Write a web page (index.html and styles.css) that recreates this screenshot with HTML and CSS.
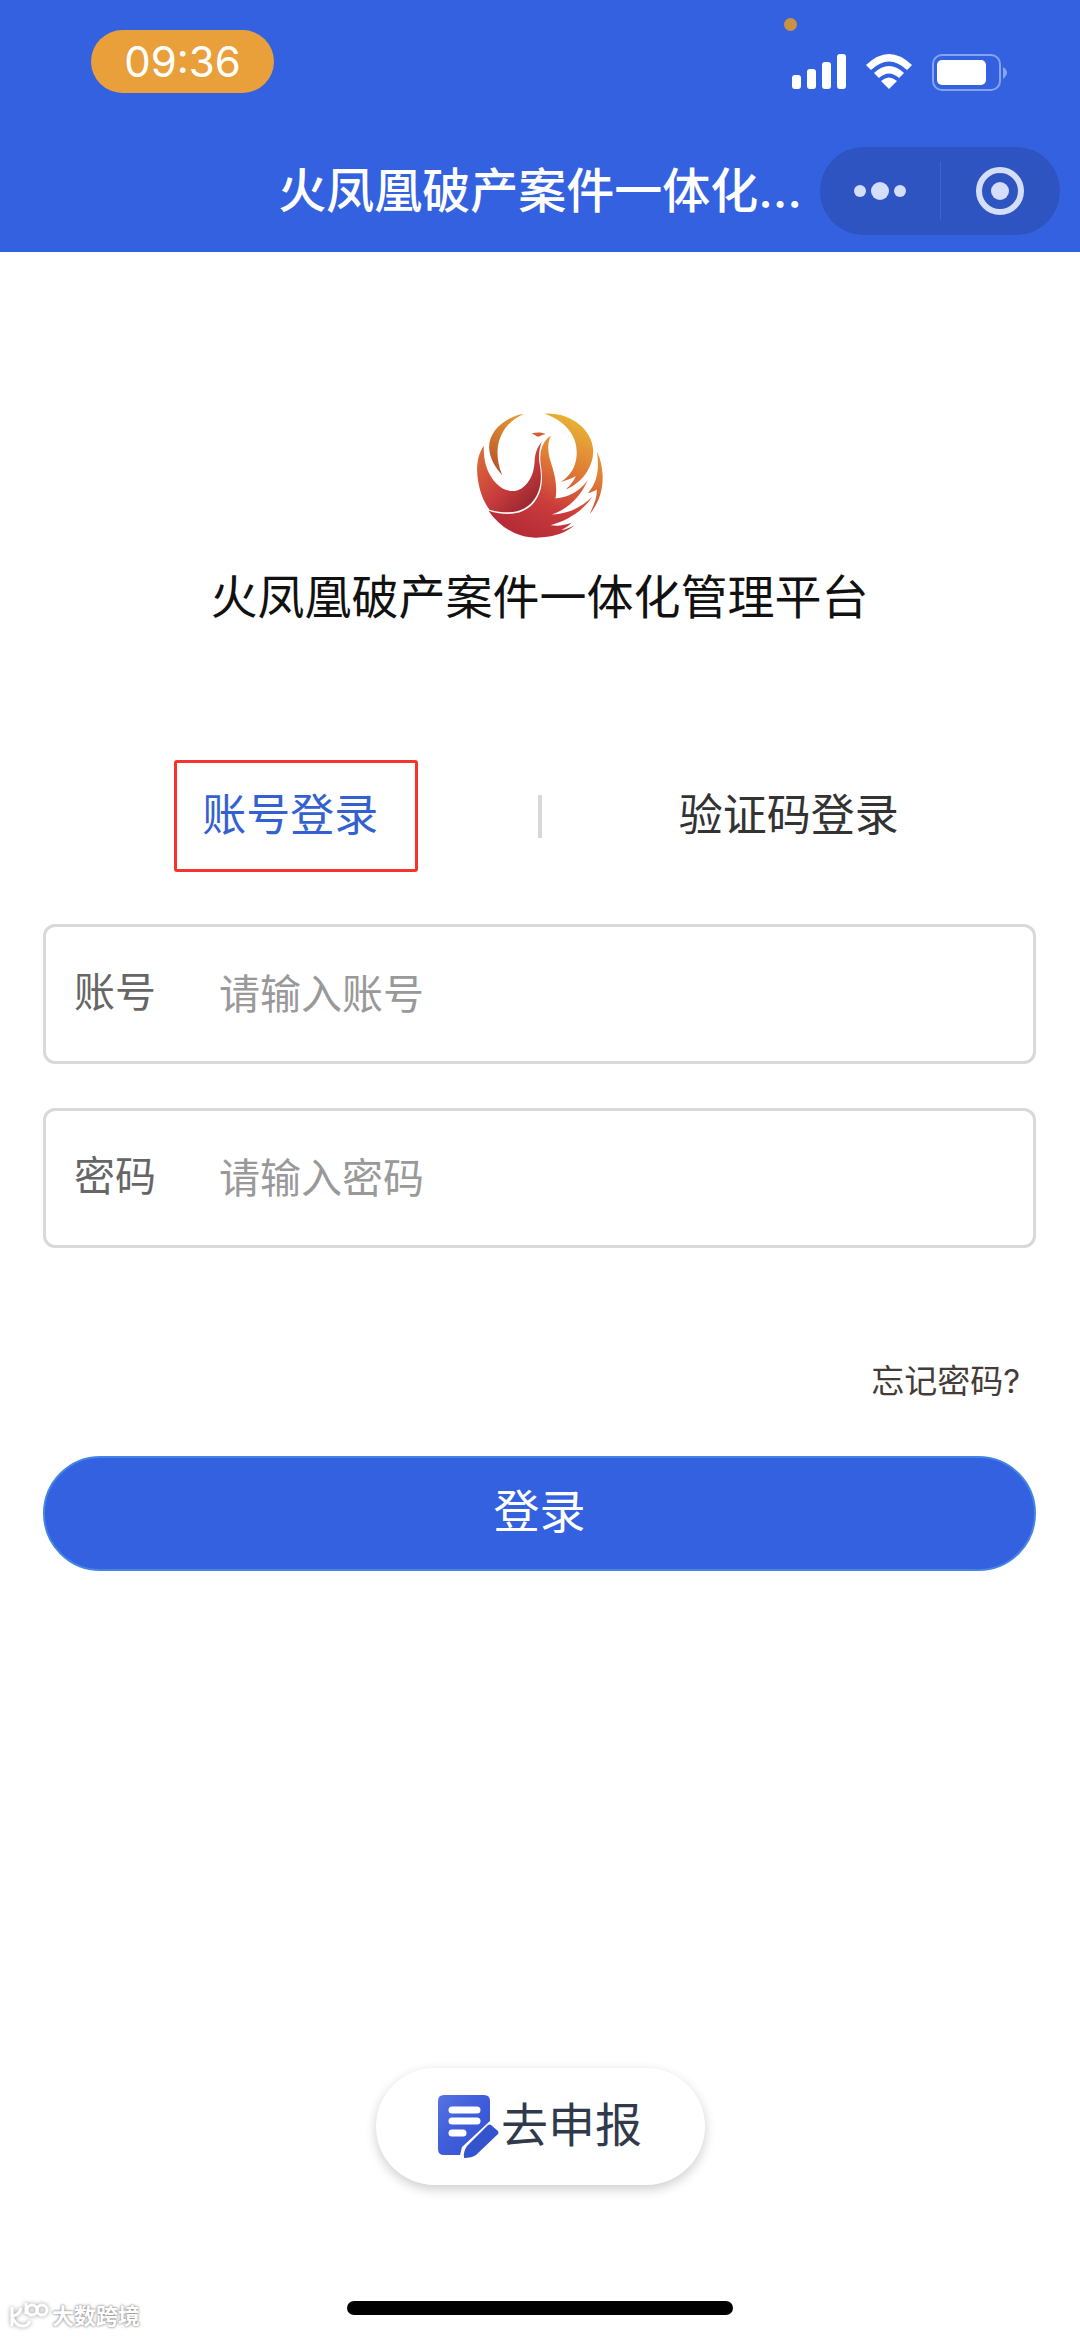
FILE: index.html
```html
<!DOCTYPE html>
<html lang="zh-CN">
<head>
<meta charset="utf-8">
<meta name="viewport" content="width=device-width, initial-scale=1">
<title>火凤凰破产案件一体化管理平台</title>
<link rel="stylesheet" href="styles.css">
</head>
<body>
<header class="header">
  <div class="status">
    <span class="time">09:36</span>
    <div class="indicators">
      <span class="recording"></span>
      <svg class="signal" viewBox="0 0 54 36" aria-hidden="true"><rect x="0" y="21" width="9" height="14" rx="3"/><rect x="15" y="15" width="9" height="20" rx="3"/><rect x="30" y="8" width="9" height="27" rx="3"/><rect x="45" y="0" width="9" height="35" rx="3"/></svg>
      <svg class="wifi" viewBox="0 0 46 36" aria-hidden="true"><path d="M0 11Q23-11 46 11L41 16Q23-1 5 16Z"/><path d="M8 19Q23 5 38 19L33 24Q23 15 13 24Z"/><path d="M15 27Q23 20 31 27L23 35Z"/></svg>
      <svg class="battery" viewBox="0 0 76 37" aria-hidden="true"><rect x="1" y="1" width="67" height="35" rx="9" fill="none" stroke="#84a3f0" stroke-width="2"/><rect x="5" y="6" width="49" height="25" rx="5" fill="#fff"/><path d="M71 13Q79 18 71 25Z" fill="#84a3f0"/></svg>
    </div>
  </div>
  <div class="nav">
    <h1 class="nav-title">火凤凰破产案件一体化…</h1>
    <div class="capsule">
      <button class="capsule-button" type="button" aria-label="更多"><svg width="52" height="24" viewBox="0 0 52 24"><circle cx="6" cy="12" r="6"/><circle cx="26" cy="12" r="9"/><circle cx="46" cy="12" r="6"/></svg></button>
      <button class="capsule-button" type="button" aria-label="关闭"><svg width="48" height="48" viewBox="0 0 48 48"><circle cx="24" cy="24" r="21" fill="none" stroke="#d5def8" stroke-width="6"/><circle cx="24" cy="24" r="9"/></svg></button>
    </div>
  </div>
</header>

<main class="main">
  <div class="brand">
    <svg class="logo" viewBox="54 38 374 374" aria-hidden="true">
      <defs>
        <linearGradient id="flame" x1="340" y1="50" x2="180" y2="400" gradientUnits="userSpaceOnUse"><stop offset="0" stop-color="#e9b535"/><stop offset=".38" stop-color="#df7a35"/><stop offset=".7" stop-color="#ca3b3b"/><stop offset="1" stop-color="#b52b37"/></linearGradient>
        <linearGradient id="wing" x1="70" y1="160" x2="220" y2="320" gradientUnits="userSpaceOnUse"><stop offset="0" stop-color="#d9683a"/><stop offset=".55" stop-color="#c93b3d"/><stop offset="1" stop-color="#94252f"/></linearGradient>
        <linearGradient id="feather" x1="170" y1="50" x2="105" y2="210" gradientUnits="userSpaceOnUse"><stop offset="0" stop-color="#e6952f"/><stop offset="1" stop-color="#b5522f"/></linearGradient>
      </defs>
      <path fill="url(#feather)" d="M194 43C145 50 88 91 90 145C92 176 106 199 129 226C108 173 111 129 133 94C149 68 169 54 194 43Z"/>
      <path fill="url(#wing)" d="M74 139C57 162 51 197 56 234C61 272 72 302 91 328C150 344 195 336 222 300C248 266 246 222 239 188C236 166 239 148 246 127C231 144 226 164 225 184C224 220 207 260 173 271C133 280 100 247 84 207C75 183 74 161 74 139Z"/>
      <path fill="url(#flame)" d="M274 108C249 124 238 155 243 193C251 239 247 274 226 303C199 340 152 350 88 331C127 387 184 417 248 410C289 407 321 394 343 374C330 381 319 387 304 388C318 382 325 377 334 367C314 375 293 377 272 374C324 360 368 331 397 289C365 321 324 341 276 342C318 329 360 294 383 240C357 275 325 291 287 295C295 250 280 210 269 173C263 147 264 126 274 108Z"/>
      <path fill="url(#flame)" d="M255 43C319 66 353 111 350 163C349 200 330 230 302 246C319 241 333 237 347 228C342 242 332 255 317 268C366 249 399 202 399 153C397 88 329 39 255 43Z"/>
      <path fill="url(#flame)" d="M410 155C417 204 413 245 383 279C394 276 402 273 410 268C410 293 400 318 388 341C414 312 428 271 427 229C426 201 421 177 410 155Z"/>
      <path fill="#cf5e32" d="M215 102C231 98 247 98 258 104C245 105 243 110 236 111C230 112 226 104 215 102Z"/>
    </svg>
    <h2 class="brand-name">火凤凰破产案件一体化管理平台</h2>
  </div>

  <div class="tabs" role="tablist">
    <button class="tab tab-active" type="button" role="tab" aria-selected="true">账号登录</button>
    <span class="tab-divider"></span>
    <button class="tab" type="button" role="tab" aria-selected="false">验证码登录</button>
  </div>

  <form class="form">
    <div class="field">
      <label class="field-label" for="account">账号</label>
      <input class="field-input" id="account" type="text" placeholder="请输入账号">
    </div>
    <div class="field">
      <label class="field-label" for="password">密码</label>
      <input class="field-input" id="password" type="password" placeholder="请输入密码">
    </div>
    <a class="forgot" href="#">忘记密码?</a>
    <button class="login" type="submit">登录</button>
  </form>
</main>

<footer class="footer">
  <button class="declare" type="button">
    <svg class="declare-icon" viewBox="0 0 61 64" aria-hidden="true">
      <defs><linearGradient id="paper" x2="1" y2="1"><stop offset="0" stop-color="#5674e0"/><stop offset=".4" stop-color="#4260dc"/><stop offset="1" stop-color="#3150ce"/></linearGradient></defs>
      <path fill="url(#paper)" d="M6 0H46Q52 0 52 6V26L24 52L22 60H6Q0 60 0 54V6Q0 0 6 0Z"/>
      <path d="M14 15H39M14 26H39M14 38H25" stroke="#fff" stroke-width="7" stroke-linecap="round"/>
      <path fill="#3454cd" d="M50 30Q52 29 53 30L60 36Q61 38 60 39L38 60Q34 63 26 63Q25 57 29 51Z"/>
    </svg>
    <span class="declare-text">去申报</span>
  </button>
  <div class="bottom-bar">
    <div class="watermark">
      <svg class="watermark-icon" viewBox="0 0 40 26" aria-hidden="true"><path d="M4 4V23M13 5Q12 12 4 13Q7 23 15 23Q20 23 22 18M18 0V11"/><circle cx="24" cy="7" r="5"/><circle cx="34" cy="7" r="5"/></svg>
      <span>大数跨境</span>
    </div>
    <span class="home-indicator"></span>
  </div>
</footer>
</body>
</html>
```
FILE: styles.css
```css
* { box-sizing: border-box; }

body {
  margin: 0;
  min-height: 100vh;
  display: flex;
  flex-direction: column;
  background: #fff;
  color: #111;
  font-family: Inter, "Noto Sans CJK SC", sans-serif;
}

button {
  margin: 0;
  padding: 0;
  border: 0;
  background: none;
  color: inherit;
  font: inherit;
}

h1, h2 { margin: 0; font-weight: 400; }
svg { display: block; }

/* Header */
.header {
  height: 252px;
  background: #3461e0;
  color: #fff;
}

.status {
  display: flex;
  justify-content: space-between;
  padding: 30px 72px 0 91px;
}

.time {
  width: 183px;
  height: 63px;
  border-radius: 32px;
  background: #e9a03b;
  font-size: 42px;
  line-height: 63px;
  text-align: center;
}

.indicators {
  position: relative;
  display: flex;
  gap: 20px;
  padding-top: 24px;
  fill: #fff;
}

.recording {
  position: absolute;
  top: -12px;
  left: -8px;
  width: 13px;
  height: 13px;
  border-radius: 50%;
  background: #cc9145;
}

.signal { width: 54px; height: 36px; }
.wifi { width: 46px; height: 36px; }
.battery { width: 76px; height: 37px; }

.nav {
  display: grid;
  grid-template-columns: 1fr auto 1fr;
  align-items: center;
  margin-top: 54px;
  padding: 0 20px;
}

.nav-title {
  grid-column: 2;
  font-size: 48px;
  font-weight: 500;
  line-height: 72px;
  white-space: nowrap;
}

.capsule {
  display: flex;
  justify-self: end;
  width: 240px;
  height: 88px;
  border-radius: 44px;
  background: #2d54c0;
}

.capsule-button {
  display: flex;
  flex: 1;
  align-items: center;
  justify-content: center;
  fill: #d5def8;
}

.capsule-button + .capsule-button {
  border-left: 1px solid #4065cb;
  margin: 15px 0;
}

/* Login */
.main { padding: 160px 44px 0 43px; }

.brand {
  display: flex;
  flex-direction: column;
  align-items: center;
  gap: 24px;
}

.logo { width: 126px; height: 126px; }

.brand-name {
  font-size: 47px;
  line-height: 70px;
}

.tabs {
  display: grid;
  grid-template-columns: 1fr 4px 1fr;
  align-items: center;
  justify-items: center;
  margin-top: 128px;
  color: #333;
  font-size: 44px;
  line-height: 112px;
}

.tab {
  position: relative;
  height: 112px;
  padding-bottom: 2px;
  line-height: 110px;
}

.tab-active { color: #3461d0; }

.tab-active::after {
  content: "";
  position: absolute;
  inset: 0 -40px 0 -28px;
  border: 3px solid #f5352c;
  border-radius: 3px;
}

.tab-divider {
  width: 4px;
  height: 43px;
  background: #d8d8d8;
}

.form {
  display: flex;
  flex-direction: column;
  margin-top: 52px;
}

.field {
  display: flex;
  align-items: center;
  height: 140px;
  margin-bottom: 44px;
  padding: 0 28px;
  border: 3px solid #d9d9d9;
  border-radius: 12px;
  font-size: 41px;
}

.field-label {
  width: 145px;
  padding-bottom: 10px;
  color: #666;
}

.field-input {
  flex: 1;
  min-width: 0;
  padding: 0;
  border: 0;
  outline: 0;
  background: none;
  color: #333;
  font: inherit;
}

.field-input::placeholder { color: #999; opacity: 1; }

.forgot {
  align-self: flex-end;
  margin: 64px 16px 50px 0;
  color: #443c38;
  font-size: 33px;
  line-height: 50px;
  text-decoration: none;
}

.login {
  height: 115px;
  padding-bottom: 12px;
  border: 2px solid #4484e2;
  border-radius: 58px;
  background: #3461e0;
  color: #fff;
  font-size: 46px;
}

/* Footer */
.footer {
  display: flex;
  flex-direction: column;
  align-items: center;
  margin-top: auto;
  padding-top: 60px;
}

.declare {
  display: flex;
  align-items: center;
  justify-content: center;
  gap: 2px;
  width: 329px;
  height: 117px;
  border-radius: 59px;
  background: #fff;
  box-shadow: 0 4px 12px rgba(0, 0, 0, .2);
  color: #303a4b;
  font-size: 47px;
}

.declare-icon { width: 61px; height: 64px; fill: none; }
.declare-text { padding-bottom: 10px; }

.bottom-bar {
  display: grid;
  grid-template-columns: 1fr 386px 1fr;
  width: 100%;
  margin-top: 116px;
  padding-bottom: 6px;
}

.watermark {
  display: flex;
  align-items: center;
  gap: 4px;
  padding-left: 8px;
  color: #fff;
  font-size: 22px;
  font-weight: 700;
  line-height: 30px;
  text-shadow: 0 0 3px #888, 0 0 2px #aaa;
}

.watermark-icon {
  width: 40px;
  height: 26px;
  overflow: visible;
  fill: none;
  stroke: #fff;
  stroke-width: 3;
  filter: drop-shadow(0 0 2px #999);
}

.home-indicator {
  height: 14px;
  border-radius: 7px;
  background: #000;
}
```
